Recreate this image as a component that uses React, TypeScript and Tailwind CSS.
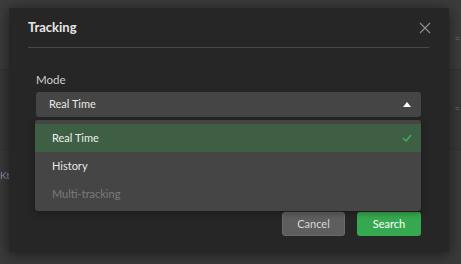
import { useState } from "react";

const options = [
  { label: "Real Time", selected: true, disabled: false },
  { label: "History", selected: false, disabled: false },
  { label: "Multi-tracking", selected: false, disabled: true },
];

export default function App() {
  const [mode] = useState("Real Time");

  return (
    <div
      className="relative w-[461px] h-[264px] overflow-hidden bg-[#3a3a3a] text-[11px]"
      style={{ fontFamily: 'Lato, "Open Sans", sans-serif' }}
    >
      {/* Page behind the overlay */}
      <div className="h-[70px] border-b border-[#333333] bg-[#3c3c3c]" />
      <div className="h-[80px] border-b border-[#333333] bg-[#383838]" />
      <div className="absolute left-0 top-[168px] text-[10px] text-[#8b8fa6]">Kt</div>
      <div className="absolute right-[1px] top-[34px] text-[9px] leading-none text-[#777]">=</div>
      <div className="absolute right-[1px] top-[104px] text-[9px] leading-none text-[#777]">=</div>

      {/* Modal */}
      <div className="absolute left-[9px] top-[8px] w-[440px] h-[244px] bg-[#262626] shadow-[0_2px_14px_rgba(0,0,0,0.55)] flex flex-col">
        {/* Header */}
        <div className="flex items-start justify-between px-[19px] pt-[10px] h-[39px]">
          <h2 className="text-[13px] leading-[18px] font-bold text-[#e6e6e6]">Tracking</h2>
          <button className="mt-[4px] mr-[-1px] text-[#8c8c8c]">
            <svg width="12" height="12" viewBox="0 0 12 12" fill="none">
              <path d="M1 1 L11 11 M11 1 L1 11" stroke="currentColor" strokeWidth="1.3" />
            </svg>
          </button>
        </div>
        <div className="mx-[19px] mr-[20px] h-px bg-[#484848]" />

        {/* Body */}
        <div className="flex flex-col pl-[27px] pr-[28px] pt-[24px] flex-1">
          <label className="text-[11.5px] leading-[16px] text-[#cfcfcf]">Mode</label>
          <div className="mt-[4px] h-[25px] rounded-[3px] bg-[#454545] flex items-center justify-between pl-[13px] pr-[10px] text-[#e8e8e8]">
            <span>{mode}</span>
            <svg width="8" height="5" viewBox="0 0 8 5">
              <path d="M4 0 L8 5 L0 5 Z" fill="#ffffff" />
            </svg>
          </div>

          <div className="mt-auto mb-[16px] flex justify-end gap-[12px]">
            <button className="w-[63px] h-[24px] rounded-[3px] bg-[#5e5e5e] border border-[#6a6a6a] text-[#d6d6d6]">
              Cancel
            </button>
            <button className="w-[64px] h-[24px] rounded-[3px] bg-[#36a84f] text-white">
              Search
            </button>
          </div>
        </div>
      </div>

      {/* Dropdown menu */}
      <div className="absolute left-[35px] top-[120px] w-[386px] h-[91px] rounded-[3px] bg-[#454545] pt-[4px] shadow-[0_2px_6px_rgba(0,0,0,0.35)]">
        {options.map((o) => (
          <div
            key={o.label}
            className={
              "h-[28px] flex items-center justify-between pl-[17px] pr-[9px] " +
              (o.selected ? "bg-[#3f5f45] text-[#eeeeee]" : o.disabled ? "text-[#7a7a7a]" : "text-[#e6e6e6]")
            }
          >
            <span>{o.label}</span>
            {o.selected && (
              <svg width="10" height="8" viewBox="0 0 10 8" fill="none">
                <path d="M1 4 L4 7 L9 1" stroke="#3db356" strokeWidth="1.4" />
              </svg>
            )}
          </div>
        ))}
      </div>
    </div>
  );
}
